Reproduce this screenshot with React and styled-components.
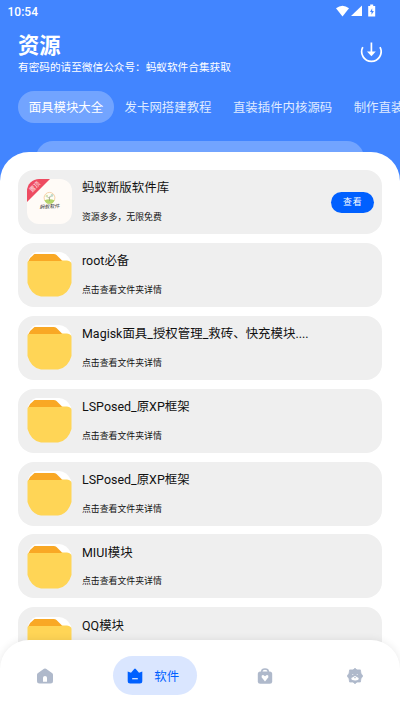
import React, { useState } from 'react';
import styled, { createGlobalStyle } from 'styled-components';

const GlobalStyle = createGlobalStyle`
* {
  box-sizing: border-box;
}
body {
  margin: 0;
  background: #fff;
  font-family: Roboto, 'Noto Sans CJK SC', sans-serif;
}
`;
const Screen = styled.div`
width: 100%;
height: 100vh;
display: flex;
flex-direction: column;
position: relative;
overflow: hidden;
background: #4285ff;
`;
const StatusBar = styled.div`
display: flex;
flex: none;
justify-content: space-between;
align-items: center;
height: 22px;
padding: 1px 24px 0 7.5px;
color: #fff;
font-size: 12px;
font-weight: 500;
`;
const StatusIcons = styled.svg`
width: 42px;
height: 14px;
margin-top: -2px;
`;
const Header = styled.header`
display: flex;
flex: none;
justify-content: space-between;
height: 69px;
padding: 10px 18px 0;
color: #fff;
`;
const Title = styled.h1`
margin: 0;
font-size: 21.3px;
line-height: 28px;
font-weight: 700;
`;
const Notice = styled.p`
margin: 0;
font-size: 10.65px;
line-height: 16px;
`;
const DownloadIcon = styled.svg`
width: 22px;
height: 22px;
margin-top: 9px;
`;
const Tabs = styled.nav`
display: flex;
flex: none;
height: 32px;
margin-left: 18px;
overflow: hidden;
`;
const Tab = styled.button`
flex: none;
height: 32px;
padding: 1px 10.7px 0;
border: 0;
border-radius: 16px;
background: ${(prop) => (prop.$active ? '#72a4ff' : 'transparent')};
color: ${(prop) => (prop.$active ? '#fff' : '#dfeaff')};
font-family: inherit;
font-size: 12.43px;
line-height: 31px;
white-space: nowrap;
`;
const SheetEdge = styled.div`
flex: none;
height: 29px;
margin: 18px 36px -18px;
border-radius: 17px 17px 0 0;
background: #72a4ff;
`;
const Sheet = styled.main`
flex: 1;
min-height: 0;
overflow: hidden;
padding: 18px 18px 0;
border-radius: 29px 29px 0 0;
background: #fff;
`;
const List = styled.div`
display: flex;
flex-direction: column;
gap: 8.9px;
`;
const Card = styled.article`
display: flex;
flex: none;
align-items: center;
height: 64px;
padding: 0 8.5px 0 9px;
border-radius: 16px;
background: #efefef;
`;
const Thumb = styled.svg`
flex: none;
width: 45px;
height: 45px;
margin: ${(prop) => (prop.$raised ? '-1px' : '0')} 10px 0 0;
`;
const CardText = styled.div`
flex: 1;
min-width: 0;
height: 64px;
padding-top: 8.4px;
color: #111;
`;
const Name = styled.div`
font-size: 12.43px;
line-height: 20px;
letter-spacing: 0.02px;
`;
const Detail = styled.div`
margin-top: 11.6px;
font-size: 8.88px;
line-height: 14px;
`;
const ViewButton = styled.button`
width: 43px;
height: 21px;
padding: 0;
border: 0;
border-radius: 11px;
background: #0060ff;
color: #fff;
font-family: inherit;
font-size: 8.88px;
line-height: 21px;
letter-spacing: 0.9px;
text-indent: 1.4px;
`;
const BottomNav = styled.nav`
position: absolute;
left: 0;
right: 0;
bottom: 0;
display: flex;
align-items: center;
height: 71px;
border-radius: 29px 29px 0 0;
background: #fff;
box-shadow: 0 0 9px rgba(0, 0, 0, 0.09);
`;
const NavItem = styled.button`
display: flex;
flex: 0 0 ${(prop) => (prop.$active ? '83.5px' : '90px')};
align-items: center;
justify-content: center;
gap: 11px;
height: 39px;
margin: 0 ${(prop) => (prop.$active ? '23px' : '0')};
padding: 0 ${(prop) => (prop.$active ? '3px' : '0')} 0 0;
border: 0;
border-radius: 20px;
background: ${(prop) => (prop.$active ? '#dae6ff' : 'transparent')};
color: ${(prop) => (prop.$active ? '#0060ff' : '#afb9cb')};
font-family: inherit;
font-size: 12.43px;
`;
const NavIcon = styled.svg`
flex: none;
width: 16px;
height: 16px;
`;

const tabs = ['面具模块大全', '发卡网搭建教程', '直装插件内核源码', '制作直装教程'];

const folders = ['root必备', 'Magisk面具_授权管理_救砖、快充模块....', 'LSPosed_原XP框架', 'LSPosed_原XP框架', 'MIUI模块', 'QQ模块'];

function AppThumb() {
  return (
    <Thumb $raised viewBox="0 0 45 45">
      <defs>
        <clipPath id="thumb"><rect width="45" height="45" rx="12" /></clipPath>
      </defs>
      <g clipPath="url(#thumb)">
        <rect width="45" height="45" fill="#fffbf7" />
        <path d="M0 0H23L0 23Z" fill="#ee4b61" />
        <text x="7.6" y="9.8" transform="rotate(-45 7.6 7.6)" textAnchor="middle" fontSize="6" fill="#ffe3e6">置顶</text>
      </g>
      <circle cx="22.5" cy="18.8" r="5.4" fill="#fffdf4" stroke="#f4c796" strokeWidth="0.8" />
      <path d="M17.4 21.2q5-2 10.2 0a5.4 5.4 0 0 1-10.2 0Z" fill="#b4d56c" />
      <path d="M22.5 22v-4.5m0 2-2.5-2m2.5 1 2.6-2" stroke="#8c907c" strokeWidth="0.6" fill="none" />
      <circle cx="19.8" cy="17" r="1.3" fill="#d3e1b4" />
      <circle cx="25" cy="16.4" r="1.3" fill="#bfd9cb" />
      <text x="22.5" y="29.3" textAnchor="middle" fontSize="5" fill="#222" fontStyle="italic" transform="rotate(-2 22.5 28)">蚂蚁软件</text>
    </Thumb>
  );
}

function FolderThumb() {
  return (
    <Thumb viewBox="0 0 45 45">
      <path d="M9 0H32Q40 0.5 44 9V14H1V9Q3 2 9 0Z" fill="#fff" />
      <path d="M1 10Q3 5 7.5 2H26.5Q28.5 2 29.5 3L35.5 9V14H1Z" fill="#f9a825" />
      <path d="M0.5 10.5Q0.5 9 2 9H32Q34 9 35 8.5H40Q44.5 9 44.5 12V31Q41 43 31 44.5H14Q4 43 0.5 31Z" fill="#ffd556" />
    </Thumb>
  );
}

function Item({ name, detail, app }) {
  return (
    <Card>
      {app ? <AppThumb /> : <FolderThumb />}
      <CardText>
        <Name>{name}</Name>
        <Detail>{detail}</Detail>
      </CardText>
      {app && <ViewButton>查看</ViewButton>}
    </Card>
  );
}

function App() {
  const [activeTab, setActiveTab] = useState(0);

  return (
    <Screen>
      <GlobalStyle />
      <StatusBar>
        <span>10:54</span>
        <StatusIcons viewBox="0 0 42 14" fill="#fff">
          <path d="M2 4.3Q8.5-1 15 4.3L8.5 12.4Z" />
          <path d="M28 1.5V12H17Z" />
          <path d="M34.2 2H36.2V.5H39.2V2H41.2V12.5H34.2Z" />
          <path d="M38.2 4.2 36 8h1.5v2.8L39.9 7h-1.7Z" fill="#4285ff" />
        </StatusIcons>
      </StatusBar>
      <Header>
        <div>
          <Title>资源</Title>
          <Notice>有密码的请至微信公众号：蚂蚁软件合集获取</Notice>
        </div>
        <DownloadIcon viewBox="0 0 22 22" fill="none" stroke="#fff" strokeWidth="1.7">
          <path d="M2.8 6.2A9.7 9.7 0 1 0 20 6.2" />
          <path d="M11.4 1.5V12" />
          <path d="M7 10.5H15.8L11.4 15.2Z" fill="#fff" stroke="none" />
        </DownloadIcon>
      </Header>
      <Tabs>
        {tabs.map((tab, i) => (
          <Tab key={tab} $active={i === activeTab} onClick={() => setActiveTab(i)}>{tab}</Tab>
        ))}
      </Tabs>
      <SheetEdge />
      <Sheet>
        <List>
          <Item app name="蚂蚁新版软件库" detail="资源多多，无限免费" />
          {folders.map((name, i) => (
            <Item key={`${name}${i + 1}`} name={name} detail="点击查看文件夹详情" />
          ))}
        </List>
      </Sheet>
      <BottomNav>
        <NavItem>
          <NavIcon viewBox="0 0 16 16" fill="currentColor">
            <path fillRule="evenodd" d="M7 .8Q8 0 9 .8L15 5Q16 5.8 16 6.8V13Q16 15.5 13.5 15.5H2.5Q0 15.5 0 13V6.8Q0 5.8 1 5ZM6 13.7H10V9.8Q10 8 8 8T6 9.8Z" />
          </NavIcon>
        </NavItem>
        <NavItem $active>
          <NavIcon viewBox="0 0 16 16" fill="currentColor">
            <path d="M.7 3.4 4 4.8 7.2.9Q8 .2 8.8.9L12 4.8 15.3 3.4V13Q15.3 15.5 12.8 15.5H3.2Q.7 15.5 .7 13Z" />
            <path d="M5.2 10.7H10.8" stroke="#dae6ff" strokeWidth="1.3" />
          </NavIcon>
          软件
        </NavItem>
        <NavItem>
          <NavIcon viewBox="0 0 16 16" fill="currentColor">
            <path d="M4.8 4V3.3Q4.8 1 8 1T11.2 3.3V4" fill="none" stroke="currentColor" strokeWidth="1.6" />
            <rect x="0.8" y="3.4" width="14.4" height="12.3" rx="2.5" />
            <path d="M8 13.5 4.6 9.2Q4.2 6.8 6.2 7L8 8.2 9.8 7Q11.8 6.8 11.4 9.2Z" fill="#fff" />
          </NavIcon>
        </NavItem>
        <NavItem>
          <NavIcon viewBox="0 0 16 16" fill="currentColor">
            <path d="M8 .3 10 1.9H13.4L13.9 5.3 15.7 8 13.9 10.7 13.4 14H10L8 15.7 6 14H2.6L2.1 10.7 .3 8 2.1 5.3 2.6 1.9H6Z" stroke="currentColor" strokeWidth="0.8" strokeLinejoin="round" />
            <path d="M4.2 11Q4.1 9.4 6.3 9.1Q8 7 9.7 9.1Q11.9 9.4 11.8 11Q11.4 12.6 8 12.4T4.2 11Z" fill="#fff" />
            <circle cx="5.8" cy="6.6" r="0.5" fill="#fff" />
            <circle cx="10.2" cy="6.6" r="0.5" fill="#fff" />
            <circle cx="8" cy="9.6" r="0.8" />
          </NavIcon>
        </NavItem>
      </BottomNav>
    </Screen>
  );
}
export default App;
